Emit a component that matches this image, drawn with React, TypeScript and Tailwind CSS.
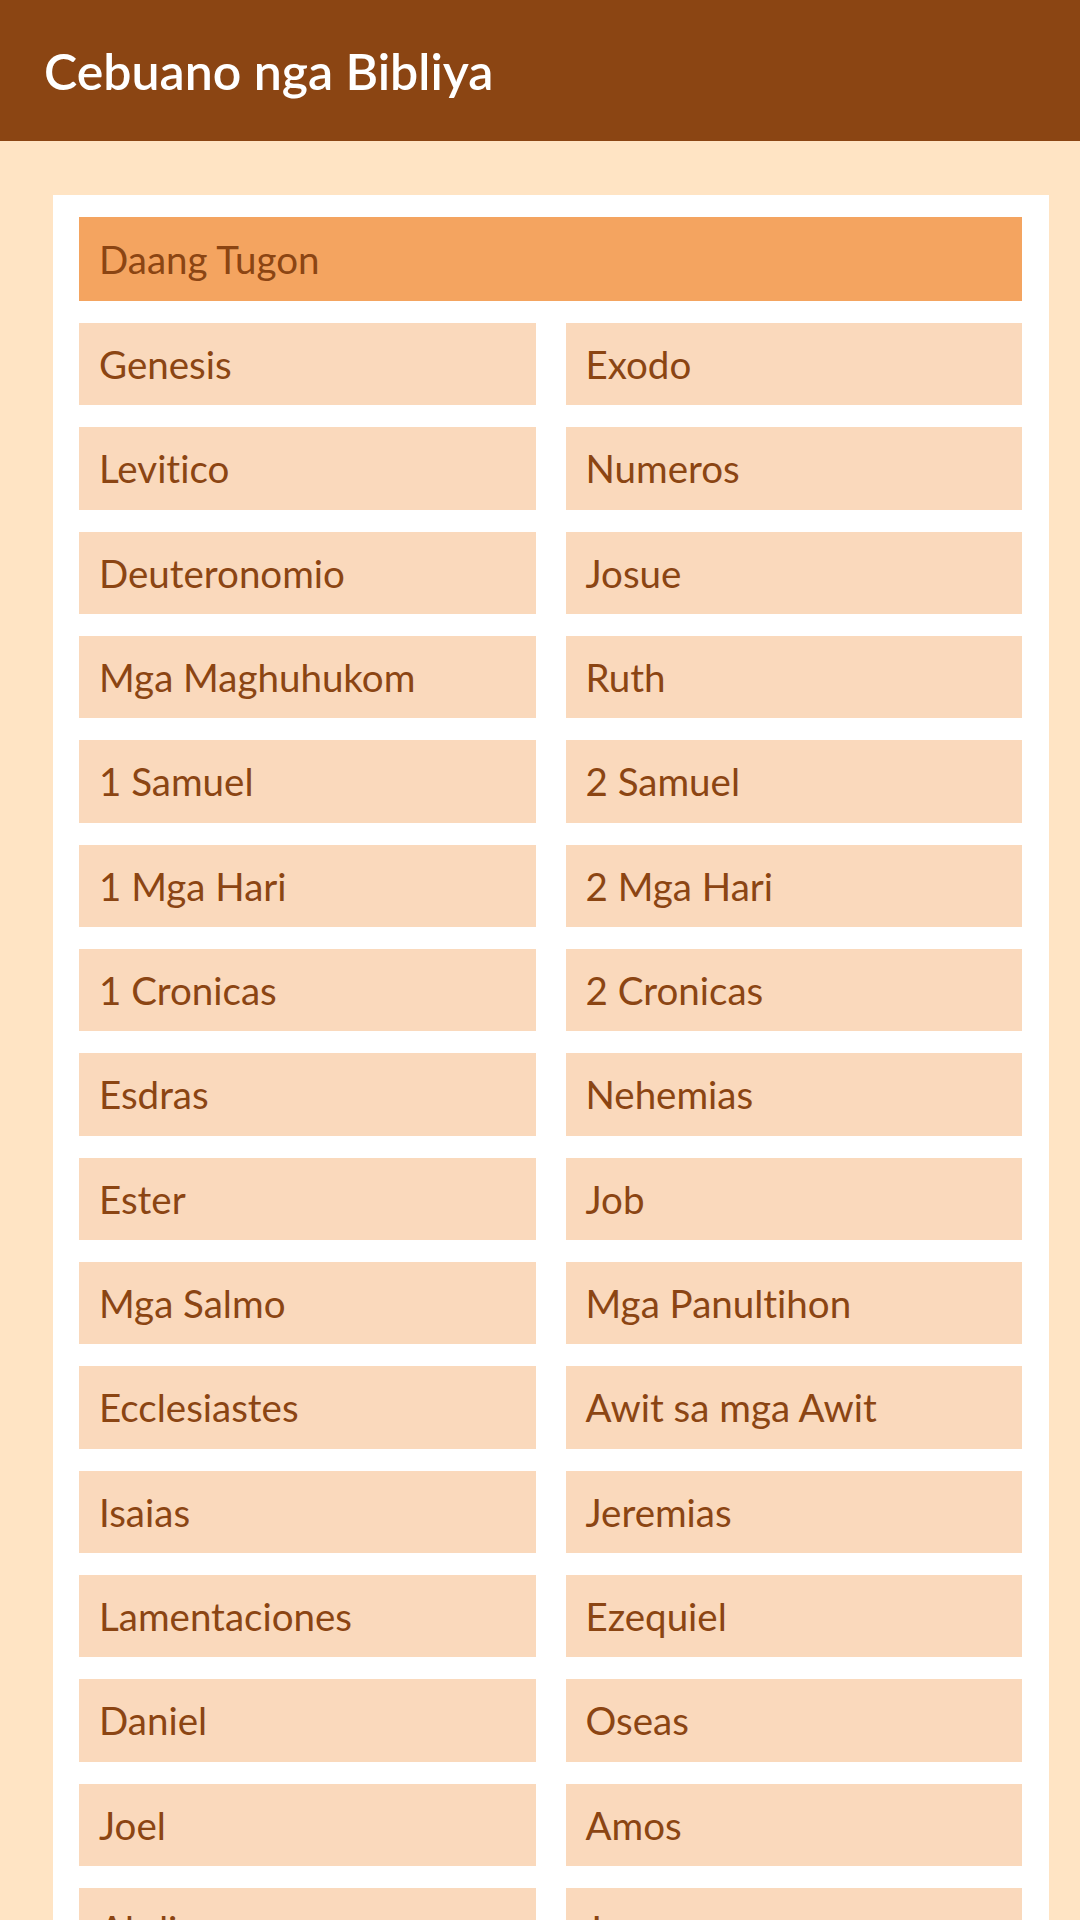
import React from "react";

const books: string[] = [
  "Genesis", "Exodo",
  "Levitico", "Numeros",
  "Deuteronomio", "Josue",
  "Mga Maghuhukom", "Ruth",
  "1 Samuel", "2 Samuel",
  "1 Mga Hari", "2 Mga Hari",
  "1 Cronicas", "2 Cronicas",
  "Esdras", "Nehemias",
  "Ester", "Job",
  "Mga Salmo", "Mga Panultihon",
  "Ecclesiastes", "Awit sa mga Awit",
  "Isaias", "Jeremias",
  "Lamentaciones", "Ezequiel",
  "Daniel", "Oseas",
  "Joel", "Amos",
  "Abdias", "Jonas",
  "Miqueas", "Nahum",
  "Habacuc", "Sofonias",
  "Hageo", "Zacarias",
  "Malaquias",
];

export default function App() {
  return (
    <div
      className="min-h-[1920px] bg-[#FFE4C4] [font-variant-ligatures:none]"
      style={{ fontFamily: 'Lato, "Open Sans", sans-serif' }}
    >
      <header className="h-[141px] bg-[#8B4513] flex items-center pl-[44px]">
        <h1 className="text-white text-[50px] leading-none font-semibold">
          Cebuano nga Bibliya
        </h1>
      </header>
      <main className="pt-[54px] pl-[53px] pr-[31px]">
        <div className="bg-white pt-[22px] pl-[26px] pr-[27px] pb-[22px]">
          <div className="h-[84px] bg-[#F4A460] flex items-center pl-[20px] text-[#8B4513] text-[38.5px] leading-none font-normal">
            Daang Tugon
          </div>
          <div className="grid grid-cols-2 gap-x-[30px] gap-y-[22px] mt-[22px]">
            {books.map((b) => (
              <div
                key={b}
                className="h-[82.33px] bg-[#FAD9BC] flex items-center pl-[20px] text-[#8B4513] text-[38.5px] leading-none font-normal"
              >
                {b}
              </div>
            ))}
          </div>
        </div>
      </main>
    </div>
  );
}
